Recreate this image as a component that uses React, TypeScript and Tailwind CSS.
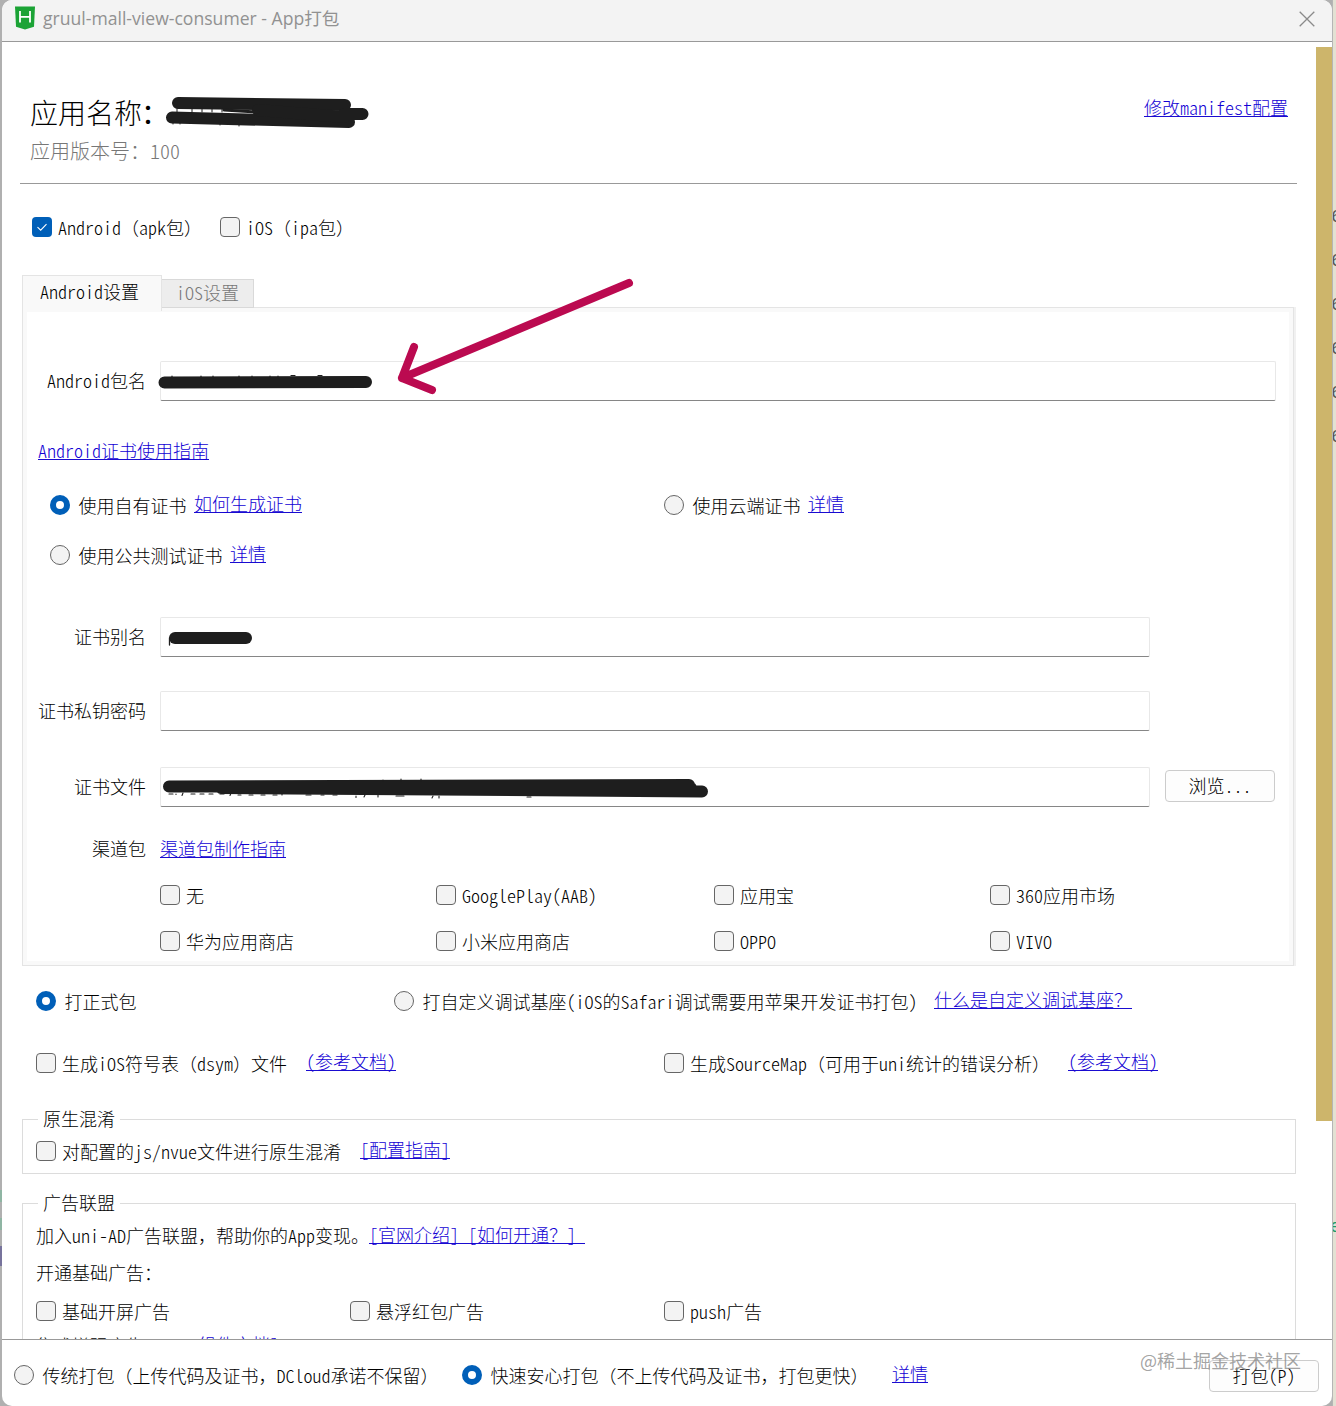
import React, { useState } from 'react';

// Latin runs use the half-width forms so they line up with the full-width CJK glyphs
const Txt: React.FC<{ children: string }> = ({ children }) => (
  <>
    {children.split(/([\x20-\x7e]+)/).map((part, i) =>
      i % 2 === 1 ? (
        <span key={i} className="whitespace-pre [font-feature-settings:'hwid']">
          {part}
        </span>
      ) : (
        part
      )
    )}
  </>
);

const Link: React.FC<{ children: string; className?: string }> = ({ children, className = '' }) => (
  <a href="#" className={`block h-[18px] shrink-0 border-b border-[#1a0cd0] leading-[16px] whitespace-nowrap text-[#1200d4] ${className}`}>
    <Txt>{children}</Txt>
  </a>
);

interface OptionProps {
  label: string;
  checked?: boolean;
  onChange?: () => void;
  className?: string;
}

const Checkbox: React.FC<OptionProps> = ({ label, checked, onChange, className = '' }) => (
  <button onClick={onChange} className={`flex h-5 shrink-0 items-center gap-1.5 ${className}`}>
    {checked ? (
      <span className="flex h-5 w-5 items-center justify-center rounded-[4px] bg-[#005fb8]">
        <svg width="12" height="10" viewBox="0 0 12 10" fill="none" stroke="white" strokeWidth="1.1">
          <path d="M1.5 5.2 4.7 8.2 10.5 2.2" />
        </svg>
      </span>
    ) : (
      <span className="h-5 w-5 rounded-[4px] border border-[#666] bg-[#f3f3f3]" />
    )}
    <span className="pb-px leading-[18px] whitespace-nowrap"><Txt>{label}</Txt></span>
  </button>
);

const Radio: React.FC<OptionProps> = ({ label, checked, onChange, className = '' }) => (
  <button onClick={onChange} className={`flex h-5 shrink-0 items-center gap-[8.5px] ${className}`}>
    {checked ? (
      <span className="h-5 w-5 rounded-full border-[6px] border-[#005fb8] bg-white" />
    ) : (
      <span className="h-5 w-5 rounded-full border border-[#666] bg-[#f3f3f3]" />
    )}
    <span className="pb-px leading-[18px] whitespace-nowrap"><Txt>{label}</Txt></span>
  </button>
);

const Field: React.FC<{ label: string; className?: string; children?: React.ReactNode }> = ({ label, className = '', children }) => (
  <div className="flex h-10 items-center">
    <span className="w-[123px] shrink-0 pb-[3px] text-right leading-5 whitespace-nowrap"><Txt>{label}</Txt></span>
    <div className={`relative ml-[14px] h-10 rounded-[2px] border border-[#e8e8e8] border-b-[#868686] bg-white ${className}`}>
      {children}
    </div>
  </div>
);

const CHANNELS = ['无', 'GooglePlay(AAB)', '应用宝', '360应用市场', '华为应用商店', '小米应用商店', 'OPPO', 'VIVO'];

const TitleBar: React.FC = () => (
  <header className="flex h-[42px] shrink-0 items-start border-b border-[#999] bg-[#f3f3f3] pl-[13px]">
    <svg className="mt-[6px]" width="20" height="24" viewBox="0 0 20 24">
      <path d="M0 .5h20l-1 20.3L10 23.5 1 20.8Z" fill="#1ba335" />
      <path d="M5 5v11.5M15 5v11.5M5 10.8h10" stroke="white" strokeWidth="1.8" fill="none" />
    </svg>
    <h1 className="ml-[8px] font-['Open_Sans','Noto_Sans_CJK_SC',sans-serif] text-[17.6px] leading-[37px] font-normal text-[#919191]">
      gruul-mall-view-consumer - App打包
    </h1>
    <svg className="mt-[11px] mr-[17px] ml-auto" width="16" height="16" viewBox="0 0 16 16" stroke="#8a8a8a" strokeWidth="1.3">
      <path d="M.7.7 15.3 15.3M15.3.7.7 15.3" />
    </svg>
  </header>
);

const AppInfo: React.FC = () => (
  <section className="ml-[18px] flex h-[142px] w-[1277px] justify-between border-b border-[#999] pr-[9px] pl-[10px]">
    <div className="relative pt-[50px]">
      <p className="text-[28px] leading-10 text-black">应用名称<b className="ml-[-1px]">：</b></p>
      <p className="text-[20px] leading-[38px] text-[#777]"><Txt>应用版本号：100</Txt></p>
      <svg className="absolute top-[53px] left-[134px]" width="210" height="36" viewBox="0 0 210 36" fill="none" stroke="#1e1e1e" strokeLinecap="round" strokeLinejoin="round">
        <path d="M14 8 181 10M8 22.5 185 27" strokeWidth="12" />
        <path d="M94 15 180 22M180 19h18.500" strokeWidth="12" />
        <path d="M60 15 94 17" strokeWidth="3" />
        <path d="M13 13v4M28 13v4M38 13v4M48 13v4M58 13v4M9 28v1M16 28v1M56 29v1M75 30v1" strokeWidth="1" />
      </svg>
    </div>
    <Link className="mt-[57px]">修改manifest配置</Link>
  </section>
);

const AndroidPanel: React.FC<{ cert: string; onCert: (v: string) => void; channels: string[]; onChannel: (v: string) => void }> = ({ cert, onCert, channels, onChannel }) => (
  <div className="h-[659px] w-[1274px] border-r-2 border-[#f1f1f1]">
    <div className="h-full border border-[#e4e4e4] bg-[#f9f9f9] p-1">
      {/* negative margin keeps the form aligned with the outer edge of the frame */}
      <div className="h-full bg-white pt-[49px]">
        <div className="-ml-[4px]">
          <Field label="Android包名" className="w-[1116px]">
            <svg className="absolute top-[-84px] left-[-6px]" width="490" height="130" viewBox="0 0 490 130" fill="none" strokeLinecap="round" strokeLinejoin="round">
              <path d="M9.500 104.500 211 104" stroke="#1e1e1e" strokeWidth="12" />
              <path d="M17 98v2M46 98v2M58 98v2M84 98v2M97 98v2M115 98v2M123 98v2M136 97.500h4M163 97.500h4" stroke="#1e1e1e" strokeWidth="1.2" />
              <path d="M474 5 247 100M259 69 247 100 277 112" stroke="#bb0a50" strokeWidth="8" />
            </svg>
          </Field>
          <div className="mt-[41px] flex pl-[15px]">
            <Link>Android证书使用指南</Link>
          </div>
          <div className="mt-[35px] flex pl-[27px]">
            <Radio label="使用自有证书" checked={cert === 'own'} onChange={() => onCert('own')} />
            <div className="ml-[7.5px] w-[470px]"><Link className="w-fit">如何生成证书</Link></div>
            <Radio label="使用云端证书" checked={cert === 'cloud'} onChange={() => onCert('cloud')} />
            <Link className="ml-[7.5px]">详情</Link>
          </div>
          <div className="mt-[30px] flex pl-[27px]">
            <Radio label="使用公共测试证书" checked={cert === 'public'} onChange={() => onCert('public')} />
            <Link className="ml-[7.5px]">详情</Link>
          </div>
          <div className="mt-[52px]">
            <Field label="证书别名" className="w-[990px]">
              <svg className="absolute top-[12px] left-[5px]" width="90" height="18" viewBox="0 0 90 18" fill="none" stroke="#1e1e1e" strokeLinecap="round">
                <path d="M9 8H80" strokeWidth="12" />
                <path d="M3.500 8v7" strokeWidth="1.3" />
              </svg>
            </Field>
          </div>
          <div className="mt-[34px]"><Field label="证书私钥密码" className="w-[990px]" /></div>
          <div className="mt-[36px] flex items-center">
            <Field label="证书文件" className="w-[990px]">
              <svg className="absolute top-[8px] left-0" width="552" height="24" viewBox="0 0 552 24" fill="none" stroke="#1e1e1e" strokeLinecap="round">
                <path d="M8 10.500 528 9M60 12 541 15.500M300 11 530 12" strokeWidth="12" />
                <path d="M8 18h4M15 18v.5M22 17l-1 2.500M30 18h4M39 18h4M48 18h4M59 18h4M70 17l-1 2.500M77 19h3M88 19h4M100 19h4M112 19h4M121 18v1M145 19h5M160 19h3M172 19h4M195 20v1.500M204 19l-1 2M217 19v2M235 20h8M272 20l-1 2M278 20v2M366 21h4M222 4v1M240 3v2M260 3v2" strokeWidth="1.1" />
              </svg>
            </Field>
            <button className="mb-[3px] ml-[15px] h-8 w-[110px] rounded-[4px] border border-[#ccc] bg-[#fdfdfd] pb-[2px] leading-[28px]"><Txt>浏览...</Txt></button>
          </div>
          <div className="mt-[33px] flex">
            <span className="w-[123px] text-right leading-[16px]">渠道包</span>
            <Link className="ml-[14px]">渠道包制作指南</Link>
          </div>
          <div className="mt-[27px] ml-[137px] grid grid-cols-[276px_278px_276px_200px] gap-y-[26px]">
            {CHANNELS.map(name => (
              <Checkbox key={name} label={name} checked={channels.includes(name)} onChange={() => onChannel(name)} />
            ))}
          </div>
        </div>
      </div>
    </div>
  </div>
);

const App: React.FC = () => {
  const [platforms, setPlatforms] = useState<string[]>(['android']);
  const [cert, setCert] = useState('own');
  const [channels, setChannels] = useState<string[]>([]);
  const [buildType, setBuildType] = useState('release');
  const [options, setOptions] = useState<string[]>([]);
  const [mode, setMode] = useState('fast');

  const toggle = (list: string[], value: string) =>
    list.includes(value) ? list.filter(v => v !== value) : [...list, value];

  const option = (label: string) => ({
    label,
    checked: options.includes(label),
    onChange: () => setOptions(prev => toggle(prev, label)),
  });

  return (
    <div className="flex h-[1406px] w-[1336px] overflow-hidden bg-[#b0b0b0] font-['Noto_Sans_CJK_SC',sans-serif] text-[18px] font-light text-black">
      <aside className="flex h-full w-[2px] shrink-0 flex-col pt-[1190px]">
        <span className="h-3 bg-[#8fb5a3]" />
        <span className="mt-4 h-3 bg-[#8fb5a3]" />
        <span className="mt-4 h-5 bg-[#77739c]" />
      </aside>
      <div className="flex w-[1330px] shrink-0 flex-col overflow-hidden rounded-[10px] bg-white">
        <TitleBar />

        <div className="flex h-[1297px] shrink-0">
          <main className="h-full w-[1314px] overflow-hidden">
            <AppInfo />

            <div className="mt-[33px] flex pl-[30px]">
              <Checkbox label="Android（apk包）" className="w-[188px]" checked={platforms.includes('android')} onChange={() => setPlatforms(prev => toggle(prev, 'android'))} />
              <Checkbox label="iOS（ipa包）" checked={platforms.includes('ios')} onChange={() => setPlatforms(prev => toggle(prev, 'ios'))} />
            </div>

            <div className="mt-[38px] ml-[20px]">
              <div className="flex h-8 items-start">
                <button className="relative h-9 w-[140px] border border-b-0 border-[#e4e4e4] bg-[#f9f9f9] pr-[5px] pb-[5px] leading-[30px]"><Txt>Android设置</Txt></button>
                <button className="mt-1 h-[29px] w-[92px] border border-l-0 border-[#d9d9d9] bg-[#ededed] pb-[3px] leading-6 text-[#777]"><Txt>iOS设置</Txt></button>
              </div>
              <AndroidPanel cert={cert} onCert={setCert} channels={channels} onChannel={name => setChannels(prev => toggle(prev, name))} />
            </div>

            <div className="mt-[25px] flex pl-[34px]">
              <Radio label="打正式包" className="w-[358px]" checked={buildType === 'release'} onChange={() => setBuildType('release')} />
              <Radio label="打自定义调试基座(iOS的Safari调试需要用苹果开发证书打包)" className="w-[540px]" checked={buildType === 'custom'} onChange={() => setBuildType('custom')} />
              <Link>什么是自定义调试基座？</Link>
            </div>

            <div className="mt-[42px] flex pl-[34px]">
              <Checkbox {...option('生成iOS符号表（dsym）文件')} className="w-[270px]" />
              <Link className="mr-[268px]">(参考文档)</Link>
              <Checkbox {...option('生成SourceMap（可用于uni统计的错误分析）')} className="w-[404px]" />
              <Link>(参考文档)</Link>
            </div>

            <fieldset className="mt-[36px] ml-[20px] h-[65px] w-[1274px] border border-[#dcdcdc] pl-[13px]">
              <legend className="ml-[2px] px-[5px] pb-[2px] leading-[18px]">原生混淆</legend>
              <div className="mt-[12px] flex">
                <Checkbox {...option('对配置的js/nvue文件进行原生混淆')} className="w-[324px]" />
                <Link>[配置指南]</Link>
              </div>
            </fieldset>

            <fieldset className="mt-[19px] ml-[20px] h-[220px] w-[1274px] border border-[#dcdcdc] pl-[13px]">
              <legend className="ml-[2px] px-[5px] pb-[2px] leading-[18px]">广告联盟</legend>
              <div className="mt-[13px] flex">
                <span className="leading-[18px] whitespace-nowrap"><Txt>加入uni-AD广告联盟，帮助你的App变现。</Txt></span>
                <Link>[官网介绍]</Link>
                <Link>{' [如何开通？] '}</Link>
              </div>
              <p className="mt-[18px] leading-5">开通基础广告：</p>
              <div className="mt-[19px] flex">
                <Checkbox {...option('基础开屏广告')} className="w-[314px]" />
                <Checkbox {...option('悬浮红包广告')} className="w-[314px]" />
                <Checkbox {...option('push广告')} />
              </div>
              <div className="mt-[14px] flex">
                <span className="leading-5"><Txt>集成增强广告，uni-</Txt></span>
                <Link className="mt-px">组件文档]</Link>
              </div>
            </fieldset>
          </main>
          <div className="mt-[5px] h-[1074px] w-4 bg-[#cdb56b]" />
        </div>

        <footer className="flex h-[67px] shrink-0 items-start border-t border-[#999] pt-[25px] pl-[12px]">
          <Radio label="传统打包（上传代码及证书，DCloud承诺不保留）" className="w-[448px]" checked={mode === 'normal'} onChange={() => setMode('normal')} />
          <Radio label="快速安心打包（不上传代码及证书，打包更快）" className="w-[430px]" checked={mode === 'fast'} onChange={() => setMode('fast')} />
          <Link>详情</Link>
          <div className="relative -mt-[5px] mr-[13px] ml-auto">
            <button className="h-8 w-[110px] rounded-[4px] border border-[#ccc] bg-[#fdfdfd] pb-[2px] leading-[28px]"><Txt>打包(P)</Txt></button>
            <span className="absolute -top-[12px] -left-[69px] text-[18px] leading-6 font-normal whitespace-nowrap text-[#8c8c8c]/80">@稀土掘金技术社区</span>
          </div>
        </footer>
      </div>

      {/* sliver of the editor behind the dialog */}
      <aside className="h-full w-1 shrink-0 overflow-hidden border-l border-[#b5b5b5] bg-[#e3e1d3] pt-[195px] text-[#555]">
        {[1, 2, 3, 4, 5, 6].map(n => (
          <p key={n} className="-ml-[2px] h-11 font-['Liberation_Mono',monospace] leading-[44px]">6</p>
        ))}
        <p className="mt-[746px] -ml-[3px] font-['Liberation_Mono',monospace] leading-[44px] text-[#1f9a68]">e</p>
      </aside>
    </div>
  );
};

export default App;
